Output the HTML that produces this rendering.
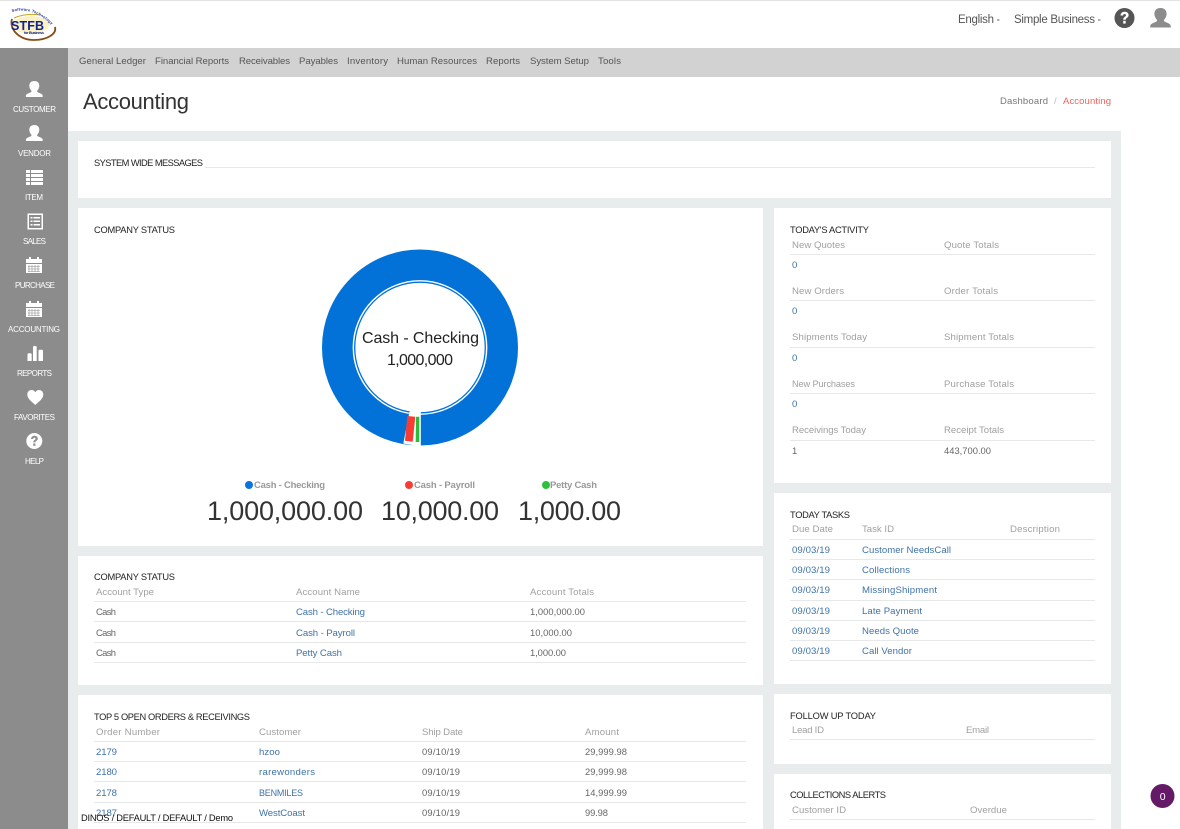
<!DOCTYPE html>
<html lang="en"><head><meta charset="utf-8"><title>Accounting</title>
<style>
html,body{margin:0;padding:0;width:1180px;height:829px;overflow:hidden;background:#fff}
svg{display:block;position:absolute;left:0;top:0}
text{font-family:"Liberation Sans",Arial,sans-serif;font-size:10px}
.nav{fill:#555;font-size:9.6px}
.sb{fill:#fff;font-size:8px}
.top{fill:#555;font-size:11.5px}
.ti{fill:#222;font-size:9.3px}
.h{fill:#a0a0a0;font-size:9.6px}
.d{fill:#666;font-size:9.4px}
.l{fill:#3f73a8;font-size:9.6px}
.lg{fill:#999;font-size:9.5px;font-weight:bold}
.big{fill:#333;font-size:27px}
.c{fill:#222;font-size:16px}
.ln{stroke:#e7e9e9;stroke-width:1}
</style></head><body>
<svg width="1180" height="829" viewBox="0 0 1180 829" xmlns="http://www.w3.org/2000/svg">
<defs>
<path id="u" d="M0 0c-3.300 0-5 2-5 4.800 0 2 .9 3.600 2 4.800.4.600.2 1.200-.4 1.600-1.400.8-3.400 1.200-4.600 2.400-.4.500-.4 1.400-.4 2.400h16.800c0-1 0-1.900-.4-2.400-1.200-1.200-3.200-1.600-4.600-2.400-.6-.4-.8-1-.4-1.600 1.100-1.200 2-2.800 2-4.800C5 2 3.300 0 0 0z"/>
<g id="cal"><path fill="#fff" d="M0 2h3V0h2v2h6V0h2v2h3v4H0z"/><path fill="#fff" d="M0 7h16v9H0z"/><path stroke="#8c8c8c" stroke-width=".6" d="M2 9.500h12M2 12h12M2 14.500h12M3 8v7M6 8v7M9 8v7M12 8v7" fill="none"/></g>
</defs>

<!-- page regions -->
<rect x="0" y="0" width="1180" height="1" fill="#e4e4e4"/>
<rect x="0" y="48" width="68" height="781" fill="#8c8c8c"/>
<rect x="68" y="48" width="1112" height="29" fill="#d2d2d2"/>
<rect x="68" y="131" width="1053" height="698" fill="#e8ecec"/>

<!-- cards -->
<g fill="#fff">
<rect x="78" y="141" width="1033" height="57"/>
<rect x="78" y="208" width="685" height="338"/>
<rect x="774" y="208" width="337" height="275"/>
<rect x="78" y="556" width="685" height="129"/>
<rect x="774" y="493" width="337" height="191"/>
<rect x="78" y="695" width="685" height="134"/>
<rect x="774" y="694" width="337" height="70"/>
<rect x="774" y="774" width="337" height="55"/>
</g>

<!-- logo -->
<g>
<ellipse cx="31" cy="25" rx="18" ry="9" fill="#f6e7a0" opacity=".6"/>
<path d="M12 19C9 28 18 40 34 40C47 40 57 34 55 27" fill="none" stroke="#8a4a12" stroke-width="1.800"/>
<path d="M14 18Q26 13 40 15" fill="none" stroke="#c9a520" stroke-width="1"/>
<text x="11" y="30" textLength="33" style="font-size:12.500px;font-weight:bold;fill:#12218c">STFB</text>
<text x="24" y="34" textLength="20" style="font-size:3.800px;font-weight:bold;fill:#12218c">for Business</text>
<path id="lgarc" d="M12 12Q36 5 58 32" fill="none"/>
<text style="font-size:3.800px;font-weight:bold;fill:#1c2c96;letter-spacing:.3px"><textPath href="#lgarc">Software Technology</textPath></text>
</g>

<!-- header right -->
<text class="top" x="958" y="23" textLength="36">English</text>
<rect x="997" y="19.500" width="2.500" height="1" fill="#666"/>
<text class="top" x="1014" y="23" textLength="81">Simple Business</text>
<rect x="1098" y="19.500" width="2.500" height="1" fill="#666"/>
<circle cx="1124.500" cy="18" r="10" fill="#555"/>
<path d="M1120.500 15.500c.2-2.500 2-3.700 4.100-3.700 2.300 0 4 1.300 4 3.400 0 2.600-2.900 2.500-2.900 4.500h-2.500c0-3 2.800-3 2.800-4.500 0-.7-.6-1.200-1.400-1.200-.9 0-1.400.6-1.500 1.500z" fill="#fff"/>
<rect x="1123.200" y="20.800" width="2.500" height="2.800" fill="#fff"/>
<use href="#u" transform="translate(1160.500 8) scale(1.220)" fill="#8c8c8c"/>

<!-- top nav -->
<text class="nav" x="79" y="64" textLength="67">General Ledger</text>
<text class="nav" x="155" y="64" textLength="74">Financial Reports</text>
<text class="nav" x="239" y="64" textLength="51">Receivables</text>
<text class="nav" x="299" y="64" textLength="39">Payables</text>
<text class="nav" x="347" y="64" textLength="41">Inventory</text>
<text class="nav" x="397" y="64" textLength="80">Human Resources</text>
<text class="nav" x="486" y="64" textLength="34">Reports</text>
<text class="nav" x="530" y="64" textLength="59">System Setup</text>
<text class="nav" x="598" y="64" textLength="23">Tools</text>

<!-- sidebar -->
<g fill="#fff">
<use href="#u" transform="translate(34.300 81)"/>
<use href="#u" transform="translate(34.300 125)"/>
<path d="M26 170h4v3h-4zM31 170h12v3H31zM26 174h4v3h-4zM31 174h12v3H31zM26 178h4v3h-4zM31 178h12v3H31zM26 182h4v3h-4zM31 182h12v3H31z"/>
<path fill-rule="evenodd" d="M27.500 213.500h15.500v16H27.500zM29 215v13h12.500v-13z"/>
<path d="M30.500 217h2v1.500h-2zM33.500 217h6.500v1.500h-6.500zM30.500 220.500h2v1.500h-2zM33.500 220.500h6.500v1.500h-6.500zM30.500 224h2v1.500h-2zM33.500 224h6.500v1.500h-6.500z"/>
<use href="#cal" transform="translate(26 257)"/>
<use href="#cal" transform="translate(26 301)"/>
<path d="M27.500 354.500q0-1.200 1.200-1.200h1.800q1.200 0 1.200 1.200v6.500h-4.200zM33 347.500q0-1.500 1.200-1.500h1.300q1.200 0 1.200 1.500V361H33zM38.500 351q0-1.200 1.200-1.200h2q1.300 0 1.300 1.200v10h-4.500z"/>
<path d="M35.300 405c-3-3-8-6-8-10.500 0-2.600 1.800-4.500 4.200-4.500 1.700 0 3 .9 3.800 2.300.8-1.400 2.100-2.300 3.800-2.300 2.400 0 4.200 1.900 4.200 4.500 0 4.500-5 7.500-8 10.500z"/>
<circle cx="34.300" cy="441" r="8"/>
<path fill="#8c8c8c" d="M31 439c.2-2 1.700-3.200 3.500-3.200 1.900 0 3.300 1.100 3.300 2.800 0 2.200-2.400 2.100-2.400 3.800h-2.100c0-2.500 2.300-2.500 2.300-3.800 0-.6-.5-1-1.100-1-.8 0-1.200.5-1.300 1.300zM33.200 443.500h2.200v2.200h-2.200z"/>
</g>
<text class="sb" x="13" y="112" textLength="43">CUSTOMER</text>
<text class="sb" x="18" y="156" textLength="33">VENDOR</text>
<text class="sb" x="25" y="200" textLength="18">ITEM</text>
<text class="sb" x="23" y="244" textLength="23">SALES</text>
<text class="sb" x="15" y="288" textLength="40">PURCHASE</text>
<text class="sb" x="8" y="332" textLength="52">ACCOUNTING</text>
<text class="sb" x="17" y="376" textLength="35">REPORTS</text>
<text class="sb" x="14" y="420" textLength="41">FAVORITES</text>
<text class="sb" x="25" y="464" textLength="19">HELP</text>

<!-- page title -->
<text x="83" y="109" textLength="106" style="font-size:22px;fill:#333">Accounting</text>
<text x="1000" y="104" textLength="48" style="font-size:9.500px;fill:#777">Dashboard</text>
<text x="1054" y="104" style="font-size:9.500px;fill:#bbb">/</text>
<text x="1063" y="104" textLength="48" style="font-size:9.500px;fill:#f0645a">Accounting</text>

<!-- system messages -->
<text class="ti" x="94" y="166" textLength="109">SYSTEM WIDE MESSAGES</text>
<line class="ln" x1="205" y1="167.500" x2="1095" y2="167.500"/>

<!-- company status donut -->
<text class="ti" x="94" y="233" textLength="81">COMPANY STATUS</text>
<circle cx="420" cy="347.500" r="82.700" fill="none" stroke="#0372d8" stroke-width="30.600"/>
<circle cx="420" cy="347.500" r="65.300" fill="none" stroke="#0372d8" stroke-width="1.300"/>
<path d="M403.300 443.500L409.500 411.500H420.800V446.500z" fill="#fff"/>
<path d="M407.300 416L415.300 416.700 412.700 441.700 405 440.700z" fill="#f73c36"/>
<path d="M416 416.700h3.300V442h-3.600z" fill="#2dbb3a"/>
<text class="c" x="362" y="343" textLength="117">Cash - Checking</text>
<text class="c" x="387" y="365" textLength="66">1,000,000</text>

<circle cx="249" cy="485" r="4" fill="#0a74da"/>
<text class="lg" x="254" y="488" textLength="71">Cash - Checking</text>
<circle cx="409" cy="485" r="4" fill="#f73c36"/>
<text class="lg" x="414" y="488" textLength="61">Cash - Payroll</text>
<circle cx="546" cy="485" r="4" fill="#2dc13c"/>
<text class="lg" x="550" y="488" textLength="47">Petty Cash</text>
<text class="big" x="207" y="520" textLength="156">1,000,000.00</text>
<text class="big" x="381" y="520" textLength="118">10,000.00</text>
<text class="big" x="518" y="520" textLength="103">1,000.00</text>

<!-- company status table -->
<text class="ti" x="94" y="580" textLength="81">COMPANY STATUS</text>
<text class="h" x="96" y="595" textLength="58">Account Type</text>
<text class="h" x="296" y="595" textLength="64">Account Name</text>
<text class="h" x="530" y="595" textLength="64">Account Totals</text>
<line class="ln" x1="94" y1="601.500" x2="746" y2="601.500"/>
<text class="d" x="96" y="615" textLength="20">Cash</text>
<text class="l" x="296" y="615" textLength="69">Cash - Checking</text>
<text class="d" x="530" y="615" textLength="55">1,000,000.00</text>
<line class="ln" x1="94" y1="621.500" x2="746" y2="621.500"/>
<text class="d" x="96" y="636" textLength="20">Cash</text>
<text class="l" x="296" y="636" textLength="59">Cash - Payroll</text>
<text class="d" x="530" y="636" textLength="42">10,000.00</text>
<line class="ln" x1="94" y1="642.500" x2="746" y2="642.500"/>
<text class="d" x="96" y="656" textLength="20">Cash</text>
<text class="l" x="296" y="656" textLength="46">Petty Cash</text>
<text class="d" x="530" y="656" textLength="36">1,000.00</text>
<line class="ln" x1="94" y1="662.500" x2="746" y2="662.500"/>

<!-- top 5 -->
<text class="ti" x="94" y="720" textLength="156">TOP 5 OPEN ORDERS &amp; RECEIVINGS</text>
<text class="h" x="96" y="735" textLength="64">Order Number</text>
<text class="h" x="259" y="735" textLength="42">Customer</text>
<text class="h" x="422" y="735" textLength="41">Ship Date</text>
<text class="h" x="585" y="735" textLength="34">Amount</text>
<line class="ln" x1="94" y1="741.500" x2="746" y2="741.500"/>
<text class="l" x="96" y="755" textLength="21">2179</text>
<text class="l" x="259" y="755" textLength="21">hzoo</text>
<text class="d" x="422" y="755" textLength="38">09/10/19</text>
<text class="d" x="585" y="755" textLength="42">29,999.98</text>
<line class="ln" x1="94" y1="761.500" x2="746" y2="761.500"/>
<text class="l" x="96" y="775" textLength="21">2180</text>
<text class="l" x="259" y="775" textLength="56">rarewonders</text>
<text class="d" x="422" y="775" textLength="38">09/10/19</text>
<text class="d" x="585" y="775" textLength="42">29,999.98</text>
<line class="ln" x1="94" y1="781.500" x2="746" y2="781.500"/>
<text class="l" x="96" y="796" textLength="21">2178</text>
<text class="l" x="259" y="796" textLength="44" style="font-size:9px">BENMILES</text>
<text class="d" x="422" y="796" textLength="38">09/10/19</text>
<text class="d" x="585" y="796" textLength="42">14,999.99</text>
<line class="ln" x1="94" y1="802.500" x2="746" y2="802.500"/>
<text class="l" x="96" y="816" textLength="21">2187</text>
<text class="l" x="259" y="816" textLength="46">WestCoast</text>
<text class="d" x="422" y="816" textLength="38">09/10/19</text>
<text class="d" x="585" y="816" textLength="23">99.98</text>
<line class="ln" x1="94" y1="822.500" x2="746" y2="822.500"/>
<text x="81" y="821" textLength="152" style="font-size:9.300px;fill:#111">DINOS / DEFAULT / DEFAULT / Demo</text>

<!-- today's activity -->
<text class="ti" x="790" y="233" textLength="79">TODAY'S ACTIVITY</text>
<text class="h" x="792" y="248" textLength="53">New Quotes</text>
<text class="h" x="944" y="248" textLength="55">Quote Totals</text>
<line class="ln" x1="790" y1="254.500" x2="1095" y2="254.500"/>
<text class="l" x="792" y="268" textLength="5">0</text>
<text class="h" x="792" y="294" textLength="52">New Orders</text>
<text class="h" x="944" y="294" textLength="54">Order Totals</text>
<line class="ln" x1="790" y1="300.500" x2="1095" y2="300.500"/>
<text class="l" x="792" y="314" textLength="5">0</text>
<text class="h" x="792" y="340" textLength="75">Shipments Today</text>
<text class="h" x="944" y="340" textLength="70">Shipment Totals</text>
<line class="ln" x1="790" y1="347.500" x2="1095" y2="347.500"/>
<text class="l" x="792" y="361" textLength="5">0</text>
<text class="h" x="792" y="387" textLength="63" style="font-size:9.200px">New Purchases</text>
<text class="h" x="944" y="387" textLength="70">Purchase Totals</text>
<line class="ln" x1="790" y1="393.500" x2="1095" y2="393.500"/>
<text class="l" x="792" y="407" textLength="5">0</text>
<text class="h" x="792" y="433" textLength="74">Receivings Today</text>
<text class="h" x="944" y="433" textLength="60">Receipt Totals</text>
<line class="ln" x1="790" y1="440.500" x2="1095" y2="440.500"/>
<text class="d" x="792" y="454" textLength="4">1</text>
<text class="d" x="944" y="454" textLength="47">443,700.00</text>

<!-- today tasks -->
<text class="ti" x="790" y="518" textLength="60">TODAY TASKS</text>
<text class="h" x="792" y="532" textLength="41">Due Date</text>
<text class="h" x="862" y="532" textLength="32">Task ID</text>
<text class="h" x="1010" y="532" textLength="50">Description</text>
<line class="ln" x1="790" y1="539.500" x2="1095" y2="539.500"/>
<text class="l" x="792" y="553" textLength="38">09/03/19</text>
<text class="l" x="862" y="553" textLength="89">Customer NeedsCall</text>
<line class="ln" x1="790" y1="559.500" x2="1095" y2="559.500"/>
<text class="l" x="792" y="573" textLength="38">09/03/19</text>
<text class="l" x="862" y="573" textLength="48">Collections</text>
<line class="ln" x1="790" y1="579.500" x2="1095" y2="579.500"/>
<text class="l" x="792" y="593" textLength="38">09/03/19</text>
<text class="l" x="862" y="593" textLength="75">MissingShipment</text>
<line class="ln" x1="790" y1="600.500" x2="1095" y2="600.500"/>
<text class="l" x="792" y="614" textLength="38">09/03/19</text>
<text class="l" x="862" y="614" textLength="60">Late Payment</text>
<line class="ln" x1="790" y1="620.500" x2="1095" y2="620.500"/>
<text class="l" x="792" y="634" textLength="38">09/03/19</text>
<text class="l" x="862" y="634" textLength="57">Needs Quote</text>
<line class="ln" x1="790" y1="640.500" x2="1095" y2="640.500"/>
<text class="l" x="792" y="654" textLength="38">09/03/19</text>
<text class="l" x="862" y="654" textLength="50">Call Vendor</text>
<line class="ln" x1="790" y1="660.500" x2="1095" y2="660.500"/>

<!-- follow up -->
<text class="ti" x="790" y="719" textLength="86">FOLLOW UP TODAY</text>
<text class="h" x="792" y="733" textLength="32">Lead ID</text>
<text class="h" x="966" y="733" textLength="23">Email</text>
<line class="ln" x1="790" y1="739.500" x2="1095" y2="739.500"/>

<!-- collections -->
<text class="ti" x="790" y="798" textLength="96">COLLECTIONS ALERTS</text>
<text class="h" x="792" y="813" textLength="54">Customer ID</text>
<text class="h" x="970" y="813" textLength="37">Overdue</text>
<line class="ln" x1="790" y1="819.500" x2="1095" y2="819.500"/>

<!-- badge -->
<circle cx="1162.500" cy="796" r="12" fill="#651a68"/>
<text x="1159.800" y="800" style="font-size:10.500px;fill:#fff">0</text>
</svg>
</body></html>
